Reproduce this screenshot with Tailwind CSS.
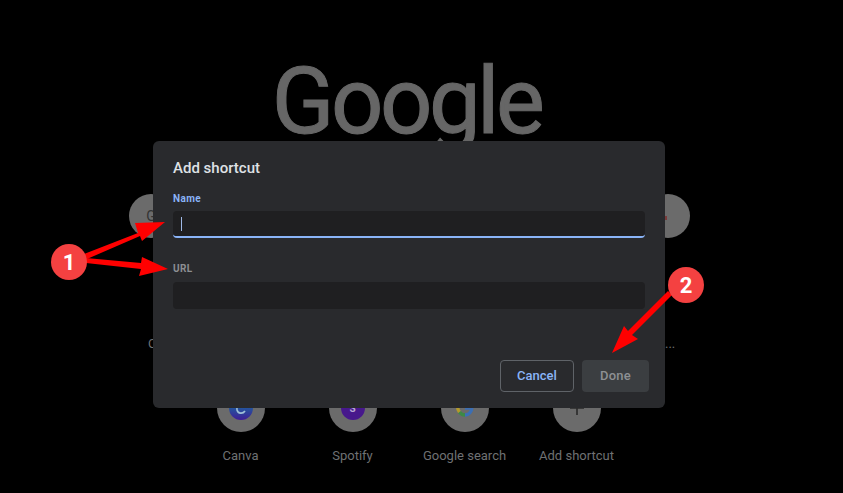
<!DOCTYPE html>
<html lang="en">
<head>
    <meta charset="UTF-8">
    <title>Add shortcut</title>
    <script src="https://cdn.jsdelivr.net/npm/@tailwindcss/browser@4"></script>
</head>
<body class="bg-black">
    <div class="relative w-[843px] h-[493px] overflow-hidden bg-black font-['Roboto',sans-serif]">
        <!-- New tab page behind the dialog -->
        <div class="flex flex-col items-center">
            <div class="h-[194px] w-full flex justify-center pt-[47px] pr-[30px]">
                <span class="text-[92px] leading-[110px] tracking-[-3.5px] font-normal text-[#666666] [-webkit-text-stroke:1px_#666666]">Google</span>
            </div>
            <!-- first row, mostly hidden -->
            <div class="w-full flex justify-between pl-[129px] pr-[153px] h-[190px]">
                <div class="w-[44px] h-[44px] rounded-full bg-[#6b6b6b] flex items-center justify-center text-[#333] text-sm">G</div>
                <div class="w-[44px] h-[44px] rounded-full bg-[#6b6b6b]"></div>
            </div>
            <!-- second row -->
            <div class="flex w-[448px] justify-between ml-[-26px]">
                <div class="w-[112px] flex flex-col items-center gap-[15px]">
                    <div class="w-[48px] h-[48px] rounded-full bg-[#6b6b6b] flex items-center justify-center">
                        <svg class="w-[24px] h-[24px]" viewBox="0 0 24 24" fill="none">
                            <defs>
                                <linearGradient id="canva" x1="0" y1="0" x2="0" y2="1">
                                    <stop offset="0.4" stop-color="#1f5f9e"/>
                                    <stop offset="1" stop-color="#3f1d96"/>
                                </linearGradient>
                            </defs>
                            <circle cx="12" cy="12" r="12" fill="url(#canva)"/>
                            <path d="M16 15c-2 3-7 3-8-1s2-7 5-6" stroke="#9fc0d8" stroke-width="1.6"/>
                        </svg>
                    </div>
                    <span class="text-[13px] leading-[18px] text-[#6f7173]">Canva</span>
                </div>
                <div class="w-[112px] flex flex-col items-center gap-[15px]">
                    <div class="w-[48px] h-[48px] rounded-full bg-[#6b6b6b] flex items-center justify-center">
                        <div class="w-[24px] h-[24px] rounded-full bg-[#47188c] flex items-center justify-center text-[10px] font-bold text-[#b9a9d4]">S</div>
                    </div>
                    <span class="text-[13px] leading-[18px] text-[#6f7173]">Spotify</span>
                </div>
                <div class="w-[112px] flex flex-col items-center gap-[15px]">
                    <div class="w-[48px] h-[48px] rounded-full bg-[#6b6b6b] flex items-center justify-center">
                        <svg class="w-[18px] h-[18px]" viewBox="0 0 18 18" fill="none" stroke-width="3.4">
                            <path d="M3.4 13a7 7 0 0 0 5.6 3" stroke="#3d8a45"/>
                            <path d="M9 16a7 7 0 0 0 6.8-7H9" stroke="#3c6fb4"/>
                            <path d="M2.6 5.5a7 7 0 0 0 .8 7.5" stroke="#b39a2a"/>
                        </svg>
                    </div>
                    <span class="text-[13px] leading-[18px] text-[#6f7173] whitespace-nowrap">Google search</span>
                </div>
                <div class="w-[112px] flex flex-col items-center gap-[15px]">
                    <div class="w-[48px] h-[48px] rounded-full bg-[#6b6b6b] flex items-center justify-center">
                        <svg class="w-[14px] h-[14px]" viewBox="0 0 14 14" stroke="#2a2a2a" stroke-width="1.6"><path d="M7 0v14M0 7h14"/></svg>
                    </div>
                    <span class="text-[13px] leading-[18px] text-[#6f7173] whitespace-nowrap">Add shortcut</span>
                </div>
            </div>
        </div>

        <!-- row one labels and favicon scrap poking out beside the dialog -->
        <span class="absolute left-[148px] top-[335px] text-[13px] leading-[18px] text-[#6f7173]">C</span>
        <span class="absolute left-[665px] top-[335px] text-[13px] leading-[18px] text-[#6f7173]">...</span>
        <div class="absolute left-[665px] top-[216px] w-[2px] h-[4px] bg-[#7a3a3a]"></div>

        <!-- Add shortcut dialog -->
        <div class="absolute left-[153px] top-[141px] w-[512px] h-[267px] rounded-[6px] bg-[#292a2d] px-[20px] pt-[18px] flex flex-col">
            <h1 class="text-[15px] leading-[18px] font-medium text-[#dfe1e5]">Add shortcut</h1>
            <label class="mt-[15px] text-[10px] leading-[14px] font-bold tracking-[0.4px] text-[#8ab4f8]">Name</label>
            <div class="mt-[5px] h-[27px] rounded-[4px] bg-[#1f1f21] border-b-2 border-[#8ab4f8] flex items-center pl-[8px]">
                <div class="w-px h-[14px] bg-[#9fb9e6]"></div>
            </div>
            <label class="mt-[24px] text-[10px] leading-[14px] font-bold tracking-[0.4px] text-[#8d8f92]">URL</label>
            <div class="mt-[6px] h-[27px] rounded-[4px] bg-[#1f1f21]"></div>
            <div class="mt-[51px] flex justify-end gap-[8px] mr-[-4px]">
                <button class="w-[74px] h-[32px] rounded-[4px] border border-[#5f6368] text-[13px] font-medium text-[#8ab4f8]">Cancel</button>
                <button class="w-[67px] h-[32px] rounded-[4px] bg-[#3b3e41] text-[13px] font-medium tracking-[0.2px] text-[#8d9093]">Done</button>
            </div>
        </div>

        <!-- Annotation arrows -->
        <svg class="absolute inset-0 w-[843px] h-[493px]" viewBox="0 0 843 493" fill="#ff0000">
            <polygon points="84,254 138,233 135,223 165,222 142,241 140,236 87,259"/>
            <polygon points="86,258 141,263 142,257 168,269 139,276 141,269 86,263"/>
            <polygon points="668,291 628,331 624,326 612,353 638,339 632,335 672,295"/>
        </svg>
        <div class="absolute left-[51px] top-[244px] w-[36px] h-[36px] rounded-full bg-[#f44141] flex items-center justify-center text-[22px] font-bold text-white">1</div>
        <div class="absolute left-[668px] top-[267px] w-[36px] h-[36px] rounded-full bg-[#f44141] flex items-center justify-center text-[22px] font-bold text-white">2</div>
    </div>
</body>
</html>
